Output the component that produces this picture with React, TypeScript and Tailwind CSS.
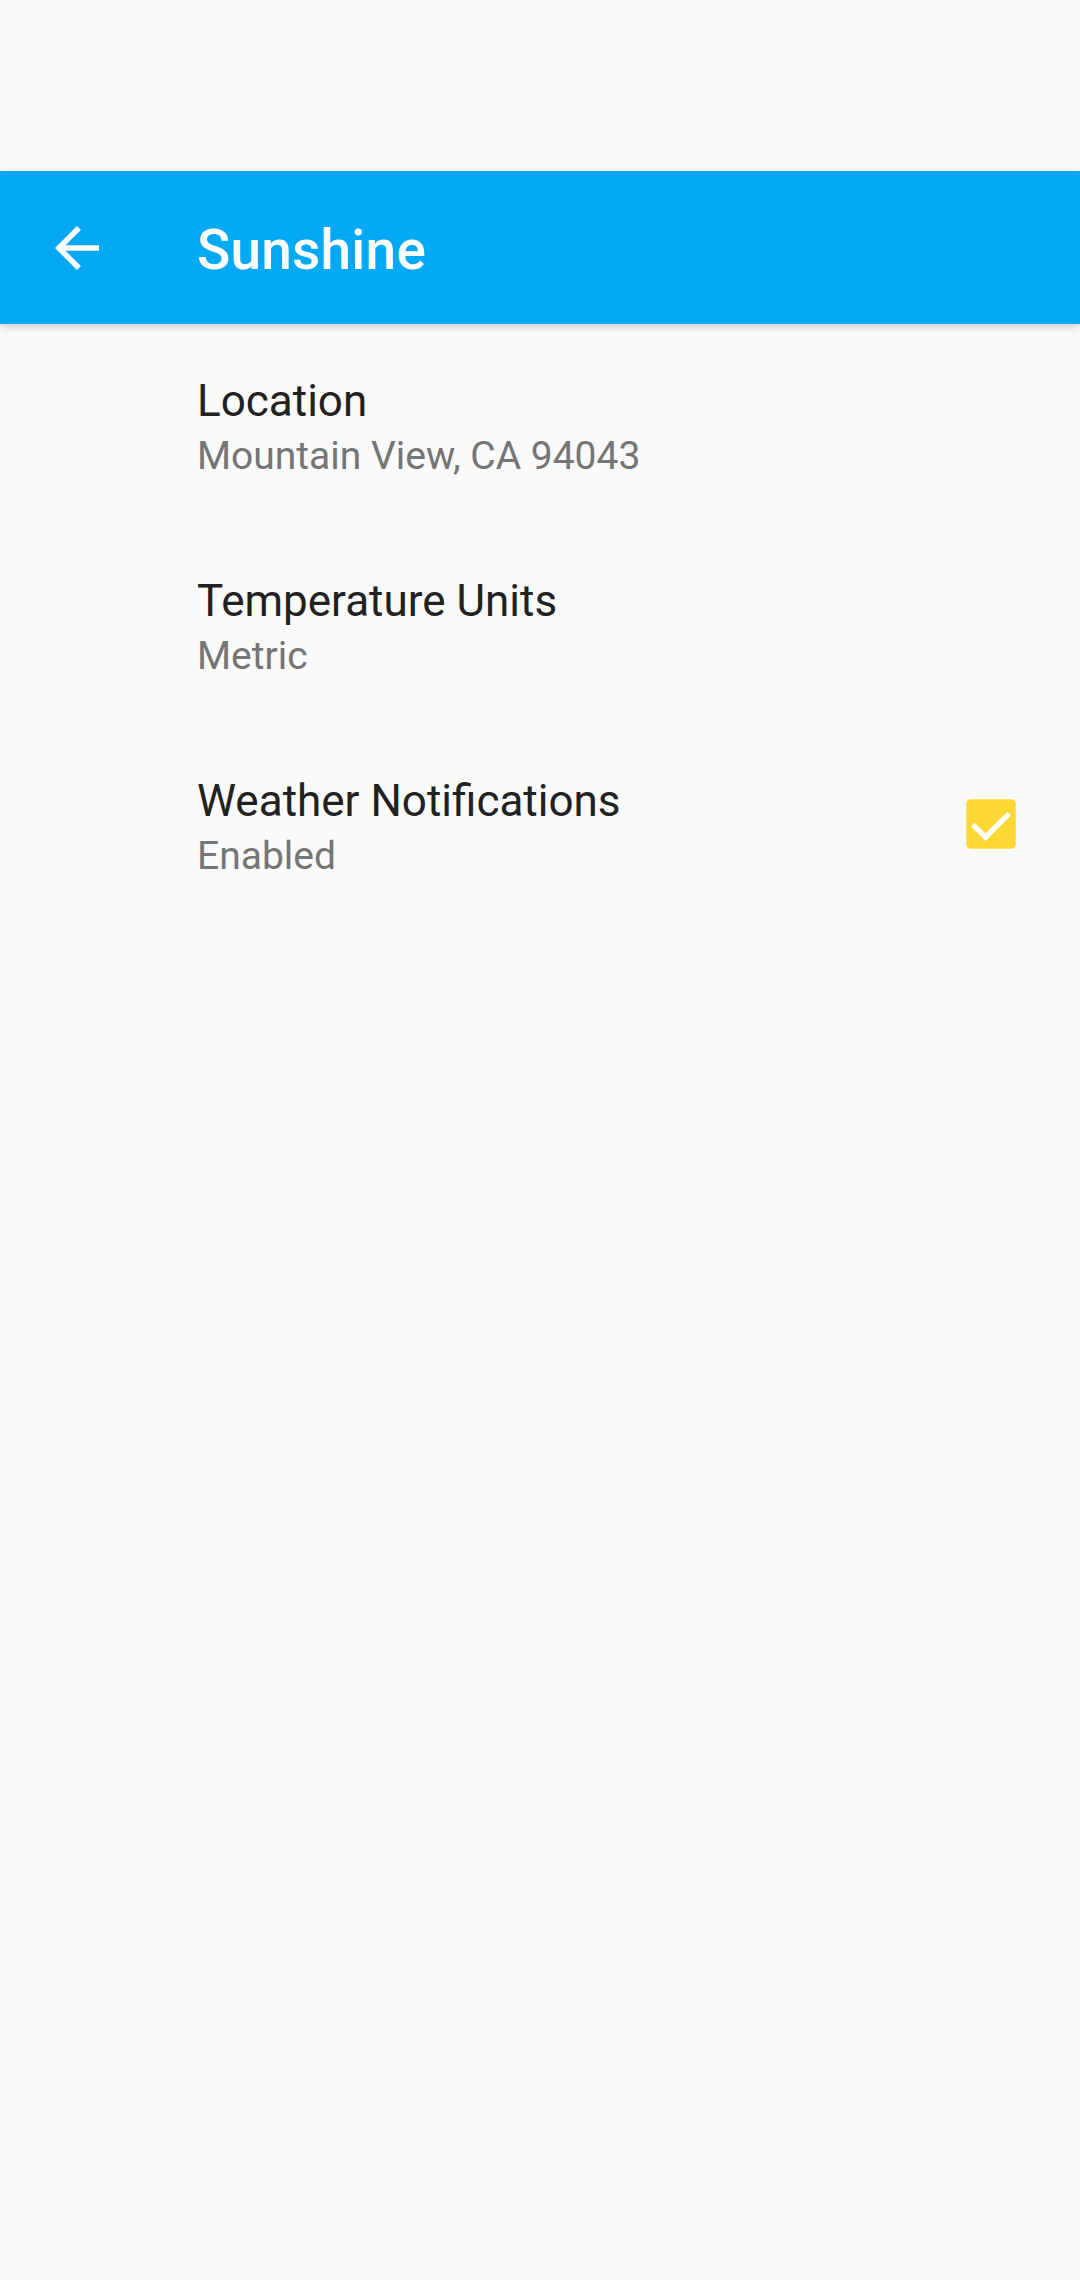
import { useState } from 'react';

type Pref = {
  title: string;
  summary: string;
  checkbox?: boolean;
};

const prefs: Pref[] = [
  { title: 'Location', summary: 'Mountain View, CA 94043' },
  { title: 'Temperature Units', summary: 'Metric' },
  { title: 'Weather Notifications', summary: 'Enabled', checkbox: true },
];

function BackArrow() {
  return (
    <svg width="66" height="66" viewBox="0 0 24 24" className="fill-white">
      <path d="M20 11H7.83l5.59-5.59L12 4l-8 8 8 8 1.41-1.41L7.83 13H20v-2z" />
    </svg>
  );
}

function CheckBox({ checked, onToggle }: { checked: boolean; onToggle: () => void }) {
  return (
    <button type="button" onClick={onToggle} className="mt-[16px] w-[66px] h-[66px] flex items-center justify-center">
      <svg width="66" height="66" viewBox="0 0 24 24">
        {checked ? (
          <>
            <rect x="3" y="3" width="18" height="18" rx="1.6" fill="#fdd835" />
            <path d="M5.4 12.2l4.6 4.6 8.6-8.6" fill="none" stroke="#ffffff" strokeWidth="1.9" />
          </>
        ) : (
          <rect x="4" y="4" width="16" height="16" rx="1.2" fill="none" stroke="#757575" strokeWidth="2" />
        )}
      </svg>
    </button>
  );
}

export default function App() {
  const [notify, setNotify] = useState(true);

  return (
    <div className="w-[1080px] h-[2280px] bg-[#fafafa] overflow-hidden" style={{ fontFamily: 'Roboto, "Noto Sans", sans-serif' }}>
      {/* status bar area */}
      <div className="h-[171px]" />

      <div className="relative z-10 h-[153px] bg-[#03a9f4] flex items-center shadow-[0_3px_8px_rgba(0,0,0,0.18)]">
        <div className="ml-[44px] w-[66px] h-[66px] flex items-center justify-center">
          <BackArrow />
        </div>
        <div className="ml-[87px] pt-[6px] text-white text-[55px] leading-none font-medium tracking-[0.2px]">Sunshine</div>
      </div>

      <div className="flex flex-col">
        {prefs.map((p) => (
          <div key={p.title} className="h-[200px] flex items-start pt-[51px] pl-[197px] pr-[56px]">
            <div className="flex-1 flex flex-col">
              <div className="text-[44px] leading-[52px] text-[#212121]">{p.title}</div>
              <div className="mt-[7px] text-[39px] leading-[45px] text-[#757575]">
                {p.checkbox ? (notify ? 'Enabled' : 'Disabled') : p.summary}
              </div>
            </div>
            {p.checkbox && <CheckBox checked={notify} onToggle={() => setNotify((v: boolean) => !v)} />}
          </div>
        ))}
      </div>
    </div>
  );
}
